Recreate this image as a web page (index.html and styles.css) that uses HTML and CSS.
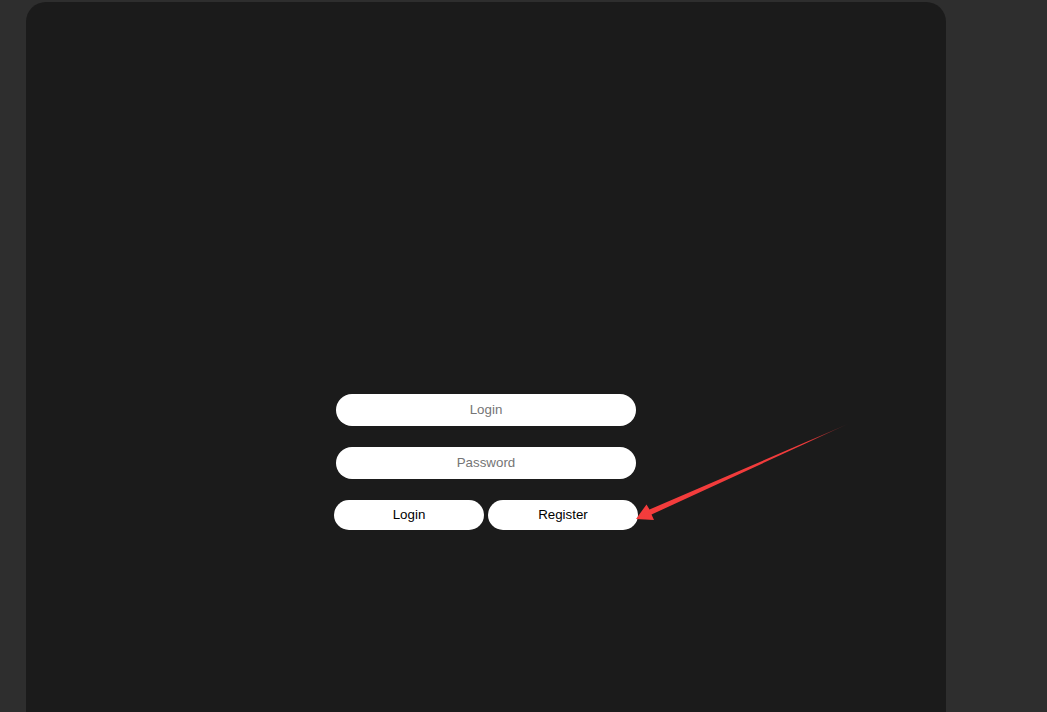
FILE: index.html
```html
<!DOCTYPE html>
<html>
<head>
<meta charset="utf-8">
<link rel="stylesheet" href="styles.css">
</head>
<body>
<main class="panel">
  <form class="auth-form">
    <input class="field" type="text" placeholder="Login">
    <input class="field" type="password" placeholder="Password">
    <div class="actions">
      <button type="button" class="btn">Login</button>
      <button type="button" class="btn">Register</button>
    </div>
  </form>
</main>
<svg class="arrow" width="1047" height="712" viewBox="0 0 1047 712">
  <defs>
    <linearGradient id="fade" x1="636" y1="519" x2="849" y2="424" gradientUnits="userSpaceOnUse">
      <stop offset="0" stop-color="#f43c3c"/>
      <stop offset="0.8" stop-color="#f03b3b"/>
      <stop offset="1" stop-color="#f03b3b" stop-opacity="0.1"/>
    </linearGradient>
  </defs>
  <polygon fill="url(#fade)" points="636,519 646.5,504.5 649.5,509.5 849,423.5 651.5,514.5 654,520"/>
</svg>
</body>
</html>
```
FILE: styles.css
```css
html, body {
  margin: 0;
  height: 100%;
  overflow: hidden;
}
body {
  background: #2e2e2e;
  padding: 2px 0 0 26px;
  font-family: "Liberation Sans", Arial, sans-serif;
  box-sizing: border-box;
}
.panel {
  width: 920px;
  height: 760px;
  background: #1b1b1b;
  border-radius: 20px;
  padding-top: 392px;
  box-sizing: border-box;
}
.auth-form {
  width: 304px;
  margin: 0 auto;
  display: flex;
  flex-direction: column;
  align-items: center;
}
.field {
  width: 300px;
  height: 32px;
  border: none;
  border-radius: 16px;
  background: #fff;
  text-align: center;
  font-family: "Liberation Sans", Arial, sans-serif;
  font-size: 13.33px;
  color: #222;
  margin: 0 0 21px;
  padding: 0 0 2px;
  box-sizing: border-box;
  outline: none;
}
.field::placeholder {
  color: #757575;
}
.actions {
  display: flex;
  gap: 4px;
}
.btn {
  width: 150px;
  height: 30px;
  border: none;
  border-radius: 15px;
  background: #fff;
  color: #000;
  font-family: "Liberation Sans", Arial, sans-serif;
  font-size: 13.33px;
  padding: 0 0 2px;
  box-sizing: border-box;
}
.arrow {
  position: absolute;
  left: 0;
  top: 0;
  pointer-events: none;
}
```
